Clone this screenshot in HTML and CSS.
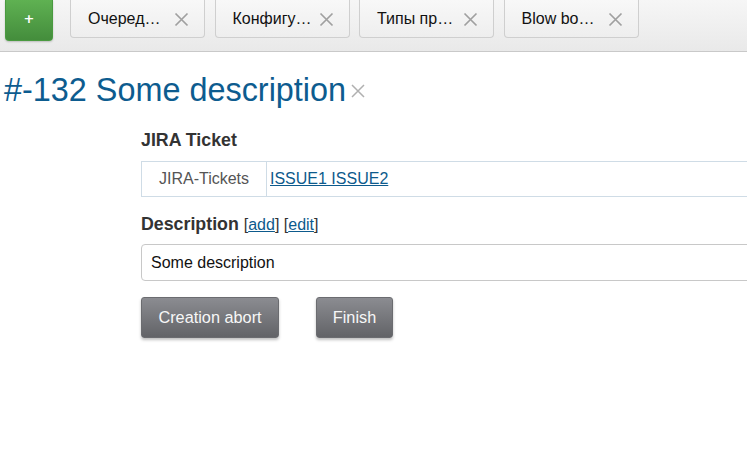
FILE: index.html
```html
<!DOCTYPE html>
<html lang="ru">
<head>
<meta charset="utf-8">
<title>#-132 Some description</title>
<link rel="stylesheet" href="styles.css">
</head>
<body>
<header class="topbar">
  <button class="add-btn" type="button">+</button>
  <nav class="tabs">
    <div class="tab"><span class="tab-label">Очеред…</span><svg class="tab-close" width="15" height="15" viewBox="0 0 15 15"><path d="M1.5 1.5L13.5 13.5M13.5 1.5L1.5 13.5"/></svg></div>
    <div class="tab"><span class="tab-label">Конфигу…</span><svg class="tab-close" width="15" height="15" viewBox="0 0 15 15"><path d="M1.5 1.5L13.5 13.5M13.5 1.5L1.5 13.5"/></svg></div>
    <div class="tab"><span class="tab-label">Типы пр…</span><svg class="tab-close" width="15" height="15" viewBox="0 0 15 15"><path d="M1.5 1.5L13.5 13.5M13.5 1.5L1.5 13.5"/></svg></div>
    <div class="tab"><span class="tab-label">Blow bo…</span><svg class="tab-close" width="15" height="15" viewBox="0 0 15 15"><path d="M1.5 1.5L13.5 13.5M13.5 1.5L1.5 13.5"/></svg></div>
  </nav>
</header>
<main class="page">
  <h1 class="title">#-132 Some description<svg class="title-close" width="16" height="16" viewBox="0 0 16 16"><path d="M2 2L14 14M14 2L2 14"/></svg></h1>
  <section class="form">
    <h2 class="label">JIRA Ticket</h2>
    <table class="ticket-table">
      <tr>
        <td class="ticket-key">JIRA-Tickets</td>
        <td class="ticket-val"><a href="#">ISSUE1 ISSUE2</a></td>
      </tr>
    </table>
    <h2 class="label desc-label">Description <span class="edit-links">[<a href="#">add</a>] [<a href="#">edit</a>]</span></h2>
    <div class="desc-input">Some description</div>
    <div class="actions">
      <button class="gray-btn abort" type="button">Creation abort</button>
      <button class="gray-btn finish" type="button">Finish</button>
    </div>
  </section>
</main>
</body>
</html>
```
FILE: styles.css
```css
html, body {
  margin: 0;
  padding: 0;
  overflow: hidden;
  background: #fff;
}
body {
  font-family: "Liberation Sans", Arial, sans-serif;
  width: 747px;
  height: 468px;
}
.topbar {
  height: 51px;
  border-bottom: 1px solid #c9c9c9;
  background: linear-gradient(#f6f6f6, #e9e9e9);
  display: flex;
  align-items: flex-start;
}
.add-btn {
  margin-left: 5px;
  width: 48px;
  height: 41px;
  border: 1px solid #4a9a40;
  border-top: none;
  border-radius: 0 0 4px 4px;
  background: linear-gradient(#5fb152, #448d3c);
  color: #fff;
  font-family: "DejaVu Sans", sans-serif;
  font-weight: bold;
  font-size: 13px;
  padding: 0 0 3px;
  line-height: 1;
  box-shadow: 0 1px 2px rgba(0,0,0,0.2);
}
.tabs {
  display: flex;
  gap: 9.5px;
  margin-left: 17px;
}
.tab {
  box-sizing: border-box;
  width: 135px;
  height: 38px;
  border: 1px solid #cfcfcf;
  border-top: none;
  border-radius: 0 0 4px 4px;
  background: linear-gradient(#f8f8f8, #eeeeee);
  display: flex;
  align-items: center;
  padding: 0 15px 0 17px;
  font-size: 16px;
  color: #111;
}
.tab-label {
  flex: 1;
  white-space: nowrap;
}
.tab-close {
  stroke: #a0a0a0;
  stroke-width: 1.7;
  fill: none;
  margin-top: 1px;
}
.title {
  margin: 19px 0 0 4px;
  font-size: 32.4px;
  line-height: 38px;
  font-weight: normal;
  color: #0d5c8f;
}
.title-close {
  stroke: #b0b0b0;
  stroke-width: 1.5;
  fill: none;
  margin-left: 4px;
  vertical-align: 2px;
}
.form {
  margin: 21px 0 0 141px;
  width: 800px;
}
.label {
  margin: 0;
  font-size: 17.8px;
  line-height: 20px;
  font-weight: bold;
  color: #333;
}
.ticket-table {
  margin-top: 11px;
  width: 100%;
  border-collapse: collapse;
  font-size: 16px;
}
.ticket-table td {
  border: 1px solid #cfdce6;
  height: 34px;
  padding: 0;
}
.ticket-key {
  width: 124px;
  text-align: center;
  color: #555;
}
.ticket-val {
  padding-left: 3px !important;
}
.ticket-val a, .edit-links a {
  color: #0d5a8c;
}
.desc-label {
  margin-top: 17px;
}
.edit-links {
  font-weight: normal;
  font-size: 16px;
  color: #333;
}
.desc-input {
  box-sizing: border-box;
  margin-top: 9px;
  height: 37px;
  border: 1px solid #c8c8c8;
  border-radius: 4px;
  padding: 0 9px;
  display: flex;
  align-items: center;
  font-size: 16px;
  color: #111;
}
.actions {
  display: flex;
  gap: 37px;
  margin-top: 16px;
}
.gray-btn {
  height: 41px;
  border: 1px solid #6b6c70;
  border-radius: 3px;
  background: linear-gradient(#8b8c91, #626367);
  color: #f7f7f7;
  font-family: "Liberation Sans", Arial, sans-serif;
  font-size: 16.3px;
  box-shadow: 0 2px 3px rgba(0,0,0,0.25);
  padding: 0;
}
.abort {
  width: 138px;
}
.finish {
  width: 77px;
}
```
